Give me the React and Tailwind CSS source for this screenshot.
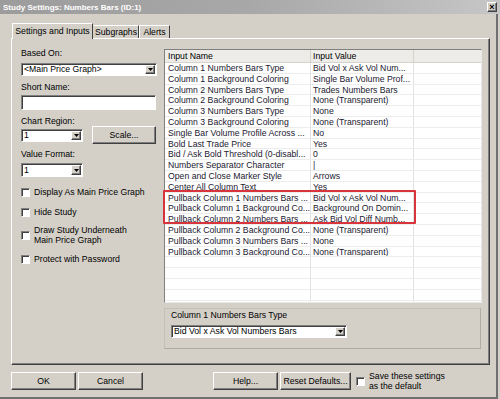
import React from "react";

const raised =
  "border border-t-white border-l-white border-r-[#404040] border-b-[#404040] shadow-[inset_-1px_-1px_0_#808080]";
const sunken =
  "border border-t-[#808080] border-l-[#808080] border-r-white border-b-white shadow-[inset_1px_1px_0_#404040]";

const rows = [
  ["Column 1 Numbers Bars Type", "Bid Vol x Ask Vol Num..."],
  ["Column 1 Background Coloring", "Single Bar Volume Prof..."],
  ["Column 2 Numbers Bars Type", "Trades Numbers Bars"],
  ["Column 2 Background Coloring", "None (Transparent)"],
  ["Column 3 Numbers Bars Type", "None"],
  ["Column 3 Background Coloring", "None (Transparent)"],
  ["Single Bar Volume Profile Across ...", "No"],
  ["Bold Last Trade Price", "Yes"],
  ["Bid / Ask Bold Threshold (0-disabl...", "0"],
  ["Numbers Separator Character", "|"],
  ["Open and Close Marker Style", "Arrows"],
  ["Center All Column Text", "Yes"],
  ["Pullback Column 1 Numbers Bars ...", "Bid Vol x Ask Vol Num..."],
  ["Pullback Column 1 Background Co...", "Background On Domin..."],
  ["Pullback Column 2 Numbers Bars ...", "Ask Bid Vol Diff Numb..."],
  ["Pullback Column 2 Background Co...", "None (Transparent)"],
  ["Pullback Column 3 Numbers Bars ...", "None"],
  ["Pullback Column 3 Background Co...", "None (Transparent)"],
  ["", ""],
  ["", ""],
  ["", ""],
  ["", ""],
  ["", ""],
];

const Dropdown = ({ value, className }) => (
  <div className={`flex items-stretch bg-white ${sunken} ${className}`}>
    <span className="flex-1 flex items-center pl-[2px] whitespace-nowrap overflow-hidden">
      {value}
    </span>
    <span
      className={`w-[10px] my-[1px] mr-[1px] flex items-center justify-center bg-[#d4d0c8] ${raised}`}
    >
      <svg width="5" height="3" viewBox="0 0 5 3">
        <path d="M0 0h5L2.5 3z" fill="#000" />
      </svg>
    </span>
  </div>
);

const Check = () => (
  <span className={`w-[9px] h-[9px] shrink-0 bg-white ${sunken}`} />
);

const Button = ({ children, className }) => (
  <button
    className={`h-[18px] flex items-center justify-center bg-[#d4d0c8] text-black ${raised} ${className}`}
  >
    {children}
  </button>
);

export default function App() {
  return (
    <div className="w-[500px] h-[399px] bg-[#d4d0c8] flex flex-col overflow-hidden font-['Liberation_Sans',Arial,sans-serif] text-[8.7px] leading-[11px] text-black">
      {/* title bar */}
      <div className="h-[14px] shrink-0 flex items-center justify-between pl-[3px] pr-[3px] bg-gradient-to-r from-[#9c9c9c] via-[#a8a8a8] to-[#c6c6c6]">
        <span className="text-white font-bold text-[8px]">
          Study Settings: Numbers Bars (ID:1)
        </span>
        <span
          className={`w-[10px] h-[10px] flex items-center justify-center bg-[#d4d0c8] text-[9px] font-bold leading-none ${raised}`}
        >
          ×
        </span>
      </div>

      {/* body */}
      <div className="flex-1 flex flex-col pl-[11px] w-[498px] border-r-2 border-b-2 border-r-[#707070] border-b-[#707070]">
        {/* tabs */}
        <div className="mt-[9px] h-[15px] flex items-end pl-[1px]">
          <div className="relative z-10 -mb-[1px] h-[16px] w-[81px] flex items-center justify-center border border-b-0 border-t-white border-l-white border-r-[#404040] bg-[#d4d0c8]">
            Settings and Inputs
          </div>
          <div className="h-[13px] w-[46px] flex items-center justify-center border border-b-0 border-t-white border-l-transparent border-r-[#404040]">
            Subgraphs
          </div>
          <div className="h-[13px] w-[31px] flex items-center justify-center border border-b-0 border-t-white border-l-white border-r-[#404040]">
            Alerts
          </div>
        </div>

        {/* panel */}
        <div className={`h-[327px] w-[479px] flex pt-[9px] pl-[9px] ${raised}`}>
          {/* left column */}
          <div className="w-[140px] flex flex-col">
            <span>Based On:</span>
            <Dropdown value="<Main Price Graph>" className="mt-[4px] h-[13px] w-[136px]" />
            <span className="mt-[6px]">Short Name:</span>
            <div className={`mt-[2px] h-[15px] w-[135px] bg-white ${sunken}`} />
            <span className="mt-[6px]">Chart Region:</span>
            <div className="flex items-start gap-[9px]">
              <Dropdown value="1" className="mt-[2px] h-[13px] w-[62px]" />
              <Button className="w-[64px] h-[17px] -mt-[1px]">Scale...</Button>
            </div>
            <span className="mt-[5px]">Value Format:</span>
            <Dropdown value="1" className="mt-[3px] h-[14px] w-[62px]" />
            <div className="mt-[10px] flex items-center gap-[4px]">
              <Check />
              <span>Display As Main Price Graph</span>
            </div>
            <div className="mt-[9px] flex items-center gap-[4px]">
              <Check />
              <span>Hide Study</span>
            </div>
            <div className="mt-[7px] flex items-center gap-[4px] leading-[10px]">
              <Check />
              <span>
                Draw Study Underneath
                <br />
                Main Price Graph
              </span>
            </div>
            <div className="mt-[9px] flex items-center gap-[4px]">
              <Check />
              <span>Protect with Password</span>
            </div>
          </div>

          {/* right column */}
          <div className="ml-[3px] w-[318px] flex flex-col">
            <div className="relative mt-[1px] h-[254px] border border-t-[#808080] border-l-[#808080] border-r-[#e8e8e8] border-b-[#e8e8e8] bg-white">
              <div className="h-full overflow-hidden">
                <div className="flex h-[13px] bg-[#eeece8] border-b border-[#d6d3cc]">
                  <span className="w-[146px] pl-[3px] flex items-center border-r border-[#d6d3cc]">
                    Input Name
                  </span>
                  <span className="w-[103px] pl-[2px] flex items-center border-r border-[#d6d3cc]">
                    Input Value
                  </span>
                  <span className="flex-1" />
                </div>
                {rows.map(([name, value], i) => (
                  <div
                    key={i}
                    className="flex h-[10.8px] leading-[10px] border-b border-[#ececec] text-[#1b2030]"
                  >
                    <span className="w-[146px] pl-[3px] whitespace-nowrap overflow-hidden border-r border-[#e2e2e2]">
                      {name}
                    </span>
                    <span className="w-[103px] pl-[2px] whitespace-nowrap overflow-hidden border-r border-[#e2e2e2]">
                      {value}
                    </span>
                    <span className="flex-1" />
                  </div>
                ))}
              </div>
              <div className="absolute left-[-2px] top-[140px] w-[253px] h-[34px] border-2 border-[#d8343c] rounded-[1px]" />
            </div>

            <div className="mt-[5px] h-[41px] w-[317px] border border-[#c4c0b8] border-b-[#b0aca4] border-r-[#b0aca4] pt-[1px] pl-[6px] flex flex-col">
              <span>Column 1 Numbers Bars Type</span>
              <Dropdown
                value="Bid Vol x Ask Vol Numbers Bars"
                className="mt-[4px] h-[13px] w-[176px]"
              />
            </div>
          </div>
        </div>

        {/* bottom buttons */}
        <div className="mt-[6px] flex items-center">
          <Button className="w-[65px]">OK</Button>
          <Button className="w-[65px] ml-[2px]">Cancel</Button>
          <Button className="w-[65px] ml-[70px]">Help...</Button>
          <Button className="w-[71px] ml-[2px]">Reset Defaults...</Button>
          <div className="ml-[5px] flex items-center gap-[4px] leading-[10px]">
            <Check />
            <span>
              Save these settings
              <br />
              as the default
            </span>
          </div>
        </div>
      </div>
    </div>
  );
}
